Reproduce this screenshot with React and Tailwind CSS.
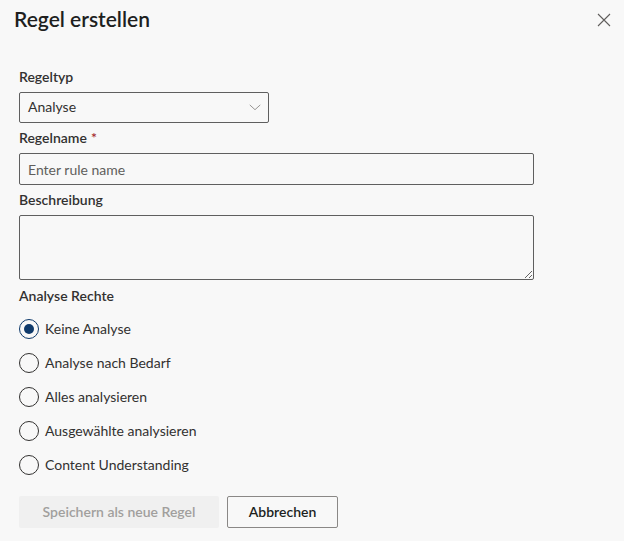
import React, { useState } from 'react';

const options = [
    'Keine Analyse',
    'Analyse nach Bedarf',
    'Alles analysieren',
    'Ausgewählte analysieren',
    'Content Understanding',
];

function FieldLabel({ children, required }) {
    return (
        <label className="block py-[5px] text-sm leading-5 font-semibold text-[#323130]">
            {children}
            {required && <span className="pl-1 text-[#a4262c]">*</span>}
        </label>
    );
}

export default function App() {
    const [choice, setChoice] = useState(0);
    const [name, setName] = useState('');
    const [desc, setDesc] = useState('');

    return (
        <div className="w-[624px] h-[541px] bg-[#f8f8f8] font-['Segoe_UI','Lato',sans-serif] text-[#323130]">
            {/* header */}
            <div className="flex items-start justify-between pl-[14px] pr-[13px] pt-[4px]">
                <h1 className="text-[21px] leading-[30px] font-semibold text-[#201f1e]">Regel erstellen</h1>
                <button className="mt-[9px] w-[14px] h-[14px] text-[#605e5c]">
                    <svg viewBox="0 0 14 14" width="14" height="14" fill="none" stroke="currentColor" strokeWidth="1.1">
                        <path d="M1 1L13 13M13 1L1 13" />
                    </svg>
                </button>
            </div>

            <div className="px-[19px] pt-[28px]">
                <FieldLabel>Regeltyp</FieldLabel>
                <div className="flex items-center justify-between w-[250px] h-[31px] border border-[#5f5f5f] rounded-[2px] pl-[8px] pr-[6px] pb-[1px] text-sm">
                    <span>Analyse</span>
                    <svg viewBox="0 0 14 8" width="14" height="7" fill="none" stroke="#8a8886" strokeWidth="1">
                        <path d="M1 1L7 6.5L13 1" />
                    </svg>
                </div>

                <FieldLabel required>Regelname</FieldLabel>
                <input
                    className="block w-[515px] h-[32px] border border-[#5f5f5f] rounded-[2px] px-[8px] text-sm bg-transparent outline-none placeholder:text-[#605e5c]"
                    placeholder="Enter rule name"
                    value={name}
                    onChange={(e) => setName(e.target.value)}
                />

                <FieldLabel>Beschreibung</FieldLabel>
                <textarea
                    className="block w-[515px] h-[65px] border border-[#5f5f5f] rounded-[2px] px-[8px] py-[6px] text-sm bg-transparent outline-none"
                    value={desc}
                    onChange={(e) => setDesc(e.target.value)}
                />

                <div className="mt-[1px]">
                    <FieldLabel>Analyse Rechte</FieldLabel>
                </div>
                <div className="flex flex-col mt-[1px]">
                    {options.map((opt, i) => (
                        <button
                            key={opt}
                            onClick={() => setChoice(i)}
                            className="flex items-center h-[34px] text-sm text-left"
                        >
                            <span
                                className={
                                    choice === i
                                        ? 'flex items-center justify-center w-[20px] h-[20px] rounded-full border border-[#0f3a6b]'
                                        : 'flex items-center justify-center w-[20px] h-[20px] rounded-full border border-[#323130]'
                                }
                            >
                                {choice === i && <span className="w-[10px] h-[10px] rounded-full bg-[#0f3a6b]" />}
                            </span>
                            <span className="pl-[6px]">{opt}</span>
                        </button>
                    ))}
                </div>

                <div className="flex gap-[8px] mt-[14px]">
                    <button className="w-[200px] h-[32px] rounded-[2px] bg-[#f0f0f0] text-sm font-semibold text-[#a19f9d]">
                        Speichern als neue Regel
                    </button>
                    <button className="w-[111px] h-[32px] rounded-[2px] border border-[#8a8886] text-sm font-semibold text-[#201f1e]">
                        Abbrechen
                    </button>
                </div>
            </div>
        </div>
    );
}
